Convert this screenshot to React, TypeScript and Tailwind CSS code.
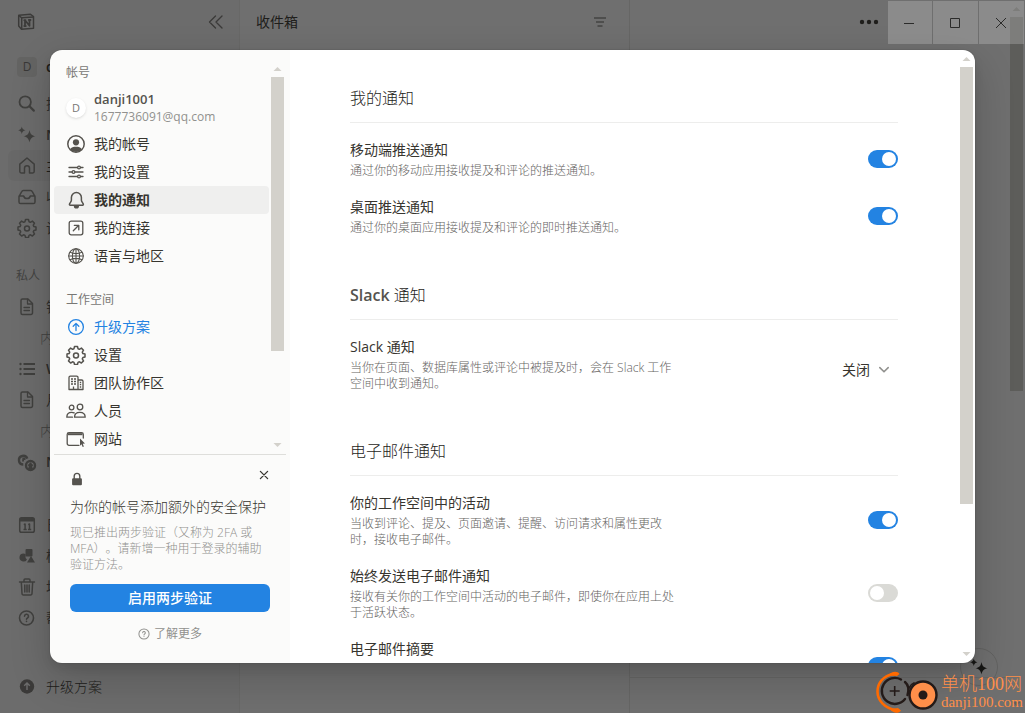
import React, { useState } from 'react';

const FONT = 'font-["Open_Sans","Noto_Sans_CJK_SC",sans-serif]';

interface IconProps {
  children: React.ReactNode;
  className?: string;
}

const Icon: React.FC<IconProps> = ({ children, className = 'size-5' }) => (
  <svg
    viewBox="0 0 20 20"
    fill="none"
    stroke="currentColor"
    strokeWidth="1.3"
    strokeLinecap="round"
    strokeLinejoin="round"
    className={`shrink-0 ${className}`}
    aria-hidden="true"
  >
    {children}
  </svg>
);

const gear = (
  <>
    <path strokeWidth="1.5" d="M8.5 1.5h3l.5 2.2 1.4.6 2-1.2 2.1 2.1-1.2 2 .6 1.4 2.1.5v2.9l-2.1.5-.6 1.4 1.2 2-2.1 2.1-2-1.2-1.4.6-.5 2.1h-3l-.5-2.1-1.4-.6-2 1.2-2.1-2.1 1.2-2-.6-1.4-2.1-.5V9.1l2.1-.5.6-1.4-1.2-2 2.1-2.1 2 1.2L8 3.7z" />
    <circle cx="10" cy="10.4" r="2.5" strokeWidth="1.5" />
  </>
);

const page = (
  <>
    <path strokeWidth="1.5" d="M5.5 2H11l4.500 4.500V16a1.500 1.500 0 0 1-1.500 1.500H5.500A1.500 1.500 0 0 1 4 16V3.500A1.500 1.500 0 0 1 5.500 2z" />
    <path d="M10.500 2.200V7h4.800M7 10.500h5.500M7 13.500h5.500" />
  </>
);

const sparkles = (
  <g fill="currentColor" stroke="none">
    <path d="M12.500 5c.9 4.200 2.200 5.500 6 6.300-3.800.8-5.100 2.100-6 6.300-.9-4.200-2.200-5.500-6-6.300 3.800-.8 5.100-2.100 6-6.300z" />
    <path d="M4.800 1.600c.5 2.400 1.300 3.200 3.700 3.700-2.400.5-3.200 1.300-3.700 3.700C4.300 6.600 3.500 5.800 1.100 5.300c2.400-.5 3.200-1.300 3.700-3.700z" />
  </g>
);

const icons = {
  search: <g strokeWidth="1.8"><circle cx="8.200" cy="8" r="5.700" /><path strokeWidth="2.2" d="m12.500 12.300 4.300 4.300" /></g>,
  sparkles,
  home: <path strokeWidth="1.5" d="M2.800 8.100 10 2l7.200 6.100v7.400a1.400 1.400 0 0 1-1.400 1.400h-3.300v-4.600a2.500 2.500 0 0 0-5 0v4.600H4.200a1.400 1.400 0 0 1-1.400-1.400z" />,
  inbox: <path strokeWidth="1.5" d="M2 9.500 4.700 4.600A2 2 0 0 1 6.400 3.500h7.200a2 2 0 0 1 1.700 1.100L18 9.500V15a1.600 1.600 0 0 1-1.600 1.600H3.600A1.600 1.600 0 0 1 2 15zM2 9h4.700c.4 1.600 1.600 2.600 3.300 2.600s2.900-1 3.300-2.600H18" />,
  gear,
  page,
  list: (
    <>
      <path strokeWidth="1.8" strokeLinecap="butt" d="M6.500 5H18M6.500 10H18M6.500 15H18" />
      <g fill="currentColor" stroke="none"><circle cx="3.500" cy="5" r="1.200" /><circle cx="3.500" cy="10" r="1.200" /><circle cx="3.500" cy="15" r="1.200" /></g>
    </>
  ),
  coins: (
    <>
      <path strokeWidth="2.4" strokeLinecap="butt" d="M10.300 6.700a4.300 4.300 0 1 0-4 5.800" />
      <path fill="currentColor" stroke="none" d="M5.500 5.500h3V8H7v1.500H5z" />
      <circle cx="13.500" cy="13.500" r="4.500" strokeWidth="2.400" />
      <path fill="currentColor" stroke="none" d="m13.500 10.300 2.800 2.900-1.100 1.100.7 2.800h-4.800l.7-2.800-1.100-1.100z" />
    </>
  ),
  calendar: (
    <>
      <rect x="2.700" y="2.700" width="14.600" height="14.600" rx="1.800" strokeWidth="1.500" />
      <path fill="currentColor" stroke="none" d="M3 3h14v3.500H3z" />
      <path strokeWidth="1.5" strokeLinecap="butt" d="m6.800 9.600 1.300-.6v5.500M6.500 14.500h3.200M11.200 9.600l1.300-.6v5.500M11 14.500h3.200" />
    </>
  ),
  shapes: (
    <g fill="currentColor" stroke="none">
      <rect x="8.500" y="3" width="7" height="7.500" rx="1" />
      <path d="M6.500 7.500a4 4 0 1 0 3.500 5.900L8.600 12V8.100a4 4 0 0 0-2.100-.6z" />
      <path d="m14 10 4 6.500H10z" />
    </g>
  ),
  trash: <path strokeWidth="1.5" d="M2.500 5h15M7 4.800V3a1 1 0 0 1 1-1h4a1 1 0 0 1 1 1v1.800M4.300 5l.7 11.500A1.400 1.400 0 0 0 6.400 18h7.200a1.400 1.400 0 0 0 1.400-1.500L15.700 5M7.800 8v7M10 8v7M12.200 8v7" />,
  help: (
    <>
      <circle cx="9.500" cy="10" r="7" strokeWidth="1.600" />
      <path strokeWidth="1.6" d="M7.500 8.300a2 2 0 1 1 3 1.700c-.7.400-1 .7-1 1.300M9.500 13.300v.2" />
    </>
  ),
  account: (
    <>
      <circle cx="10" cy="10" r="8.200" strokeWidth="1.500" />
      <g fill="currentColor" stroke="none">
        <circle cx="10" cy="8.300" r="3.100" />
        <path d="M4 15.200c1.300-1.800 3.400-2.400 6-2.400s4.700.6 6 2.400A8 8 0 0 1 10 18a8 8 0 0 1-6-2.800z" />
      </g>
    </>
  ),
  sliders: (
    <>
      <path d="M3 5.500h8.300M14.700 5.500H17M3 10h2.800M9.200 10H17M3 14.500h8.300M14.700 14.500H17" />
      <circle cx="13" cy="5.500" r="1.400" /><circle cx="7.500" cy="10" r="1.400" /><circle cx="13" cy="14.500" r="1.400" />
    </>
  ),
  bell: (
    <>
      <path strokeWidth="1.5" d="M10.400 2.500a5 5 0 0 0-5 5v2.800c0 1.500-2 3.100-2 4.300 0 .4.300.7.700.7h12.600c.4 0 .7-.3.700-.7 0-1.200-2-2.800-2-4.300V7.500a5 5 0 0 0-5-5z" />
      <path fill="currentColor" stroke="none" d="M7.800 16h5.200a2.600 2.600 0 0 1-5.200 0z" />
    </>
  ),
  link: <><rect x="3.200" y="3.200" width="13.600" height="13.600" rx="2" /><path d="m7.300 12.700 5.200-5.200M8.300 7.300h4.500v4.500" /></>,
  globe: (
    <g strokeWidth="1.1">
      <circle cx="10" cy="10" r="7.300" /><ellipse cx="10" cy="10" rx="3.600" ry="7.300" />
      <path d="M10 2.700v14.600M2.700 10h14.600M4 6.300c3.500 1.500 8.500 1.500 12 0M4 13.700c3.500-1.500 8.500-1.500 12 0" />
    </g>
  ),
  upgrade: <><circle cx="10" cy="10" r="7.400" /><path d="M10 13.500v-7M7.200 9.200 10 6.400l2.800 2.800" /></>,
  building: (
    <>
      <path d="M3 16.500v-12A1.300 1.300 0 0 1 4.300 3.200h6.400A1.300 1.300 0 0 1 12 4.500v12M12 7h3.700A1.300 1.300 0 0 1 17 8.300v8.200H3" />
      <path strokeLinecap="butt" d="M5 6h2M8 6h2M5 8.500h2M8 8.500h2M5 11h2M8 11h2M13.800 9.500h1.400M13.800 11.700h1.400M13.800 14h1.400M7.500 13.500v3" />
    </>
  ),
  people: (
    <>
      <circle cx="5.600" cy="6.500" r="2.300" /><circle cx="14" cy="6" r="2.800" />
      <path d="M6.500 16.200H.8c0-3 1.800-4.900 4.800-4.900 1 0 1.900.2 2.600.6M8.500 16.200c0-3 2-4.900 5.300-4.900s5.400 1.900 5.400 4.900z" />
    </>
  ),
  site: (
    <>
      <path d="M13 16.300H3a1.800 1.800 0 0 1-1.800-1.800v-9A1.800 1.800 0 0 1 3 3.700h12.500a1.800 1.800 0 0 1 1.800 1.800V9" />
      <path strokeWidth="2" strokeLinecap="butt" d="M2 5.200h14.500" />
      <path fill="currentColor" stroke="none" d="m14 9.500 5 5.100-2.300.2 1.200 2.600-1.200.6-1.200-2.700-1.500 1.500z" />
    </>
  ),
};

type IconName = keyof typeof icons;

interface SideItem {
  icon?: IconName;
  label: string;
  bold?: boolean;
  active?: boolean;
}

const mainItems: SideItem[] = [
  { icon: 'search', label: '搜' },
  { icon: 'sparkles', label: 'N', bold: true },
  { icon: 'home', label: '主', active: true },
  { icon: 'inbox', label: '收' },
  { icon: 'gear', label: '设' },
];

const privateItems: SideItem[] = [
  { icon: 'page', label: '钱' },
  { label: '内' },
  { icon: 'list', label: 'W', bold: true },
  { icon: 'page', label: '月' },
  { label: '内' },
  { icon: 'coins', label: 'N', bold: true },
];

const toolItems: SideItem[] = [
  { icon: 'calendar', label: '日' },
  { icon: 'shapes', label: '模' },
  { icon: 'trash', label: '垃' },
  { icon: 'help', label: '帮' },
];

const SideList: React.FC<{ items: SideItem[] }> = ({ items }) => (
  <ul>
    {items.map((item, i) => (
      <li
        key={i}
        className={`mx-2 flex h-[31px] items-center gap-[9px] rounded-md pl-[9px] ${item.active ? 'bg-black/4 text-[#37352f]' : 'text-[#5f5e5b]'}`}
      >
        {item.icon ? (
          <>
            <Icon className="size-5 text-[#8a8985]">{icons[item.icon]}</Icon>
            <span className={item.bold ? 'font-semibold' : ''}>{item.label}</span>
          </>
        ) : (
          <span className="pl-[23px] font-light text-[#91918e]">{item.label}</span>
        )}
      </li>
    ))}
  </ul>
);

const ScrollBar: React.FC<{ thumb: string }> = ({ thumb }) => (
  <div className="flex w-[17px] shrink-0 flex-col items-center justify-between" aria-hidden="true">
    <div className="flex min-h-0 w-full flex-1 flex-col items-center">
      <svg viewBox="0 0 17 17" className="size-[17px] shrink-0 fill-[#d3d1cb]"><path d="m8.500 7 4 4h-8z" /></svg>
      <div className={`w-[13px] bg-[#d3d1cb] ${thumb}`} />
    </div>
    <svg viewBox="0 0 17 17" className="size-[17px] shrink-0 fill-[#d3d1cb]"><path d="m8.500 10 4-4h-8z" /></svg>
  </div>
);

const Workspace: React.FC = () => (
  <div className="flex h-full bg-white text-sm" aria-hidden="true">
    <aside className="flex w-60 shrink-0 flex-col border-r border-[#eeeeec] bg-[#f8f8f7]">
      <div className="flex h-11 items-center justify-between pl-4 pr-[13px] text-[#7d7c78]">
        <Icon>
          <path strokeWidth="1.5" d="M3 3.200 14.500 2.300l3 2.200v11.800l-12 .9L2.700 14V3.800z" />
          <path strokeWidth="1.5" d="m2.800 3.500 3 2.300 11.500-.8M5.700 6v11" />
          <path strokeWidth="1.8" d="M9 14V8.200l4.500 5.500V8M8.300 8.200h1.200M12.800 8h1.700M8.300 14h1.500" />
        </Icon>
        <Icon><path strokeWidth="1.4" d="M9.500 4 3.500 10l6 6M16 4l-6 6 6 6" /></Icon>
      </div>
      <div className="mt-2 flex h-[30px] items-center gap-[9px] pl-[17px]">
        <span className="flex size-5 items-center justify-center rounded bg-[#e4e3e0] text-xs text-[#787774]">D</span>
        <span className="font-semibold text-[#37352f]">d</span>
      </div>
      <div className="mt-[6px]"><SideList items={mainItems} /></div>
      <p className="mt-[17px] h-[31px] pl-4 text-xs leading-[31px] text-[#91918e]">私人</p>
      <SideList items={privateItems} />
      <div className="mt-8"><SideList items={toolItems} /></div>
      <div className="mb-[11px] mt-auto flex h-[31px] items-center gap-[9px] pl-[17px] font-light text-[#37352f]">
        <svg viewBox="0 0 20 20" className="size-5 text-[#7d7c78]">
          <circle cx="10" cy="9.500" r="7.200" fill="currentColor" />
          <path d="M10 13V6M7.200 8.700 10 5.900l2.800 2.800" fill="none" stroke="#f8f8f7" strokeWidth="1.400" />
        </svg>
        升级方案
      </div>
    </aside>
    <section className="w-[390px] shrink-0 border-r border-[#e9e9e7]">
      <div className="flex h-11 items-center justify-between pl-4 pr-[19px] text-[#37352f]">
        收件箱
        <Icon className="size-5 text-[#91918e]"><path strokeLinecap="butt" strokeWidth="1.5" d="M4 6h12M6 10h8M7.500 14h5" /></Icon>
      </div>
    </section>
    <section className="flex min-w-0 flex-1 flex-col justify-between">
      <div className="flex h-11 items-center justify-end pr-[129px]">
        <svg viewBox="0 0 20 20" className="size-5 fill-[#37352f]"><circle cx="3" cy="10" r="2.200" /><circle cx="10" cy="10" r="2.200" /><circle cx="17" cy="10" r="2.200" /></svg>
      </div>
      <div className="h-9 border-t border-[#e9e9e7]" />
    </section>
    <ScrollBar thumb="h-[374px]" />
  </div>
);

const navGroups: { title: string; items: { icon: IconName; label: string }[] }[] = [
  {
    title: '帐号',
    items: [
      { icon: 'account', label: '我的帐号' },
      { icon: 'sliders', label: '我的设置' },
      { icon: 'bell', label: '我的通知' },
      { icon: 'link', label: '我的连接' },
      { icon: 'globe', label: '语言与地区' },
    ],
  },
  {
    title: '工作空间',
    items: [
      { icon: 'upgrade', label: '升级方案' },
      { icon: 'gear', label: '设置' },
      { icon: 'building', label: '团队协作区' },
      { icon: 'people', label: '人员' },
      { icon: 'site', label: '网站' },
    ],
  },
];

interface NavProps {
  items: { icon: IconName; label: string }[];
  current: string;
  onSelect: (label: string) => void;
}

const NavItems: React.FC<NavProps> = ({ items, current, onSelect }) => (
  <>
    {items.map((item) => {
      const blue = item.icon === 'upgrade';
      return (
        <button
          key={item.label}
          type="button"
          onClick={() => onSelect(item.label)}
          className={`flex h-7 w-full items-center gap-2 rounded pl-3 text-left ${current === item.label ? 'bg-[#efefee] font-bold' : ''} ${blue ? 'text-[#2383e2]' : 'text-[#37352f]'}`}
        >
          <Icon className={blue ? 'size-5' : 'size-5 text-[#55534e]'}>{icons[item.icon]}</Icon>
          {item.label}
        </button>
      );
    })}
  </>
);

const SettingsNav: React.FC = () => {
  const [current, setCurrent] = useState('我的通知');
  const [account, workspace] = navGroups;

  return (
    <div className="flex w-60 shrink-0 flex-col bg-[#fbfbfa] px-1 pt-[10px]">
      <div className="flex min-h-0 flex-1 border-b border-[#dededb]">
        <nav className="min-w-0 flex-1 overflow-hidden text-sm">
          <h2 className="pl-3 text-xs leading-[26px] text-[#787774]">{account.title}</h2>
          <div className="flex h-11 items-center gap-2 pl-3">
            <span className="flex size-5 items-center justify-center rounded-full bg-white text-[11px] text-[#787774] shadow">D</span>
            <div>
              <p className="text-[13px] font-semibold leading-[18px] text-[#55534e]">danji1001</p>
              <p className="text-xs leading-[18px] text-[#91918e]">1677736091@qq.com</p>
            </div>
          </div>
          <NavItems items={account.items} current={current} onSelect={setCurrent} />
          <h2 className="mt-[17px] pl-3 text-xs leading-[26px] text-[#787774]">{workspace.title}</h2>
          <NavItems items={workspace.items} current={current} onSelect={setCurrent} />
        </nav>
        <ScrollBar thumb="h-[274px]" />
      </div>
      <div className="flex flex-col px-4 pb-[19px] pt-[14px]">
        <div className="flex h-[17px] justify-between">
          <svg viewBox="0 0 20 20" className="size-[14px] self-end fill-[#55534e]">
            <path d="M10 1a5 5 0 0 0-5 5v3h-.5A1.500 1.500 0 0 0 3 10.500v7A1.500 1.500 0 0 0 4.500 19h11a1.500 1.500 0 0 0 1.500-1.500v-7A1.500 1.500 0 0 0 15.500 9H15V6a5 5 0 0 0-5-5zm-3 8V6a3 3 0 0 1 6 0v3z" />
          </svg>
          <button type="button" aria-label="关闭提示" className="self-start text-[#37352f]">
            <Icon className="size-3"><path strokeWidth="2.2" d="m4 4 12 12M16 4 4 16" /></Icon>
          </button>
        </div>
        <h3 className="mt-[11px] whitespace-nowrap text-sm font-light leading-5 text-[#37352f]">为你的帐号添加额外的安全保护</h3>
        <p className="mt-2 text-xs font-light leading-4 text-[#91918e] [text-spacing-trim:space-all]">
          现已推出两步验证（又称为 2FA 或 MFA）。请新增一种用于登录的辅助验证方法。
        </p>
        <button type="button" className="mt-[11px] h-7 rounded-md bg-[#2383e2] text-sm font-medium text-white">
          启用两步验证
        </button>
        <a href="#" className="mt-3 flex items-center justify-center gap-1 text-xs leading-5 text-[#91918e]">
          <Icon className="size-3">
            <circle cx="10" cy="10" r="8.500" strokeWidth="1.700" />
            <path strokeWidth="1.7" d="M7.800 8a2.200 2.200 0 1 1 3.300 1.900c-.8.500-1.100.8-1.100 1.600M10 14v.2" />
          </Icon>
          了解更多
        </a>
      </div>
    </div>
  );
};

const Section: React.FC<{ title: React.ReactNode; children: React.ReactNode }> = ({ title, children }) => (
  <section className="mb-[47px]">
    <h2 className="border-b border-[#ededec] pb-3 text-base font-light leading-6 text-[#1f1e1b]">{title}</h2>
    <div className="mt-[17px] flex flex-col gap-[18px]">{children}</div>
  </section>
);

interface SettingProps {
  id: string;
  title: string;
  text: string;
  on?: boolean;
  children?: React.ReactNode;
}

const Setting: React.FC<SettingProps> = ({ id, title, text, on = false, children }) => (
  <div className="flex items-center justify-between">
    <div className="max-w-[330px]">
      <label htmlFor={id} className="block text-sm leading-5 text-[#37352f]">{title}</label>
      <p className="mt-[3px] text-xs font-light leading-4 text-[#65645f]">{text}</p>
    </div>
    {children ?? (
      <input
        id={id}
        type="checkbox"
        role="switch"
        defaultChecked={on}
        className="mb-px flex h-[18px] w-[30px] shrink-0 appearance-none items-center rounded-full bg-[#dadad6] px-[2px] before:size-[14px] before:rounded-full before:bg-white checked:bg-[#2383e2] checked:before:translate-x-3"
      />
    )}
  </div>
);

const NotificationSettings: React.FC = () => (
  <div className="flex min-w-0 flex-1 bg-white">
    <div className="min-w-0 flex-1 overflow-hidden px-[60px] pt-9">
      <Section title="我的通知">
        <Setting id="mobile" title="移动端推送通知" text="通过你的移动应用接收提及和评论的推送通知。" on />
        <Setting id="desktop" title="桌面推送通知" text="通过你的桌面应用接收提及和评论的即时推送通知。" on />
      </Section>
      <Section title={<><span className="font-semibold text-[#55534e]">Slack</span> 通知</>}>
        <Setting id="slack" title="Slack 通知" text="当你在页面、数据库属性或评论中被提及时，会在 Slack 工作空间中收到通知。">
          <div className="relative mt-[11px]">
            <select id="slack" className="h-7 w-16 appearance-none rounded-md pl-2 text-sm text-[#37352f]">
              <option>关闭</option>
              <option>开启</option>
            </select>
            <Icon className="pointer-events-none absolute right-2 top-2 size-3 text-[#91918e]">
              <path strokeWidth="2.6" d="m3 6 7 7 7-7" />
            </Icon>
          </div>
        </Setting>
      </Section>
      <Section title="电子邮件通知">
        <Setting id="activity" title="你的工作空间中的活动" text="当收到评论、提及、页面邀请、提醒、访问请求和属性更改时，接收电子邮件。" on />
        <Setting id="always" title="始终发送电子邮件通知" text="接收有关你的工作空间中活动的电子邮件，即使你在应用上处于活跃状态。" />
        <Setting id="digest" title="电子邮件摘要" text="当你的工作空间有更新时，定期接收包含页面更改内容的电子邮件摘要。" on />
      </Section>
    </div>
    <ScrollBar thumb="h-[437px]" />
  </div>
);

const WindowControls: React.FC = () => (
  <div className="absolute right-0 top-px flex gap-px pr-px">
    {[
      { name: '最小化', d: 'M4 10.500h10', w: 'w-11' },
      { name: '最大化', d: 'M4.500 5.500h9v9h-9z', w: 'w-[45px]' },
      { name: '关闭', d: 'm4 5 10 10M14 5 4 15', w: 'w-[45px]' },
    ].map((c) => (
      <button key={c.name} type="button" aria-label={c.name} className={`flex h-[43px] items-center justify-center bg-white/20 text-[#2b2b2a] ${c.w}`}>
        <svg viewBox="0 0 20 20" fill="none" stroke="currentColor" strokeWidth="1" className="size-5"><path d={c.d} /></svg>
      </button>
    ))}
  </div>
);

const Watermark: React.FC = () => (
  <div className="absolute bottom-0 right-[2px] flex items-center gap-[3px] text-[#ff8f4a]">
    <svg viewBox="0 0 62 42" fill="none" className="h-[42px] w-[62px]" aria-hidden="true">
      <path d="M17 3C7 5 1.500 12 1.500 20.500S8 37.500 21 39.500" stroke="#ff6a00" strokeWidth="2.600" strokeLinecap="round" />
      <path d="M12 4.500C15 0 22-.5 23.500 3L21 5zM14 38c3 4.500 8.500 5 11 1.500L22 37z" fill="#ff6a00" />
      <path d="M25 8.500A13 13 0 1 0 29 28M29 11c3.500 3 4 8 2.500 13" stroke="#231a18" strokeWidth="2.400" strokeLinecap="round" />
      <path d="M18.700 15v10M13.700 20h10" stroke="#231a18" strokeWidth="1.600" />
      <path d="M33 17c1-2.500 2.500-4 5-5" stroke="#231a18" strokeWidth="1.800" strokeLinecap="round" />
      <circle cx="47" cy="24" r="13.500" fill="#ff8f4a" stroke="#231a18" strokeWidth="2.400" />
      <circle cx="47" cy="24" r="4.500" fill="#231a18" />
    </svg>
    <div className="font-['Liberation_Serif','Noto_Sans_CJK_SC',serif]">
      <p className="text-lg font-light leading-5">单机100网</p>
      <p className="text-[15px] leading-4">danji100.com</p>
    </div>
  </div>
);

const App: React.FC = () => (
  <div className={`relative h-screen overflow-hidden ${FONT}`}>
    <Workspace />
    <div className="absolute bottom-[27px] right-[27px] flex size-[38px] items-center justify-center rounded-full border border-[#dededb] text-[#1f1e1b]">
      <Icon>{icons.sparkles}</Icon>
    </div>
    <div className="absolute inset-0 bg-[#0f0f0f]/60 p-[50px]">
      <div
        role="dialog"
        aria-label="设置"
        className="flex h-full overflow-hidden rounded-xl shadow-[0_0_0_1px_rgba(15,15,15,0.05),0_5px_10px_rgba(15,15,15,0.1),0_15px_40px_rgba(15,15,15,0.2)]"
      >
        <SettingsNav />
        <NotificationSettings />
      </div>
    </div>
    <WindowControls />
    <Watermark />
  </div>
);

export default App;
